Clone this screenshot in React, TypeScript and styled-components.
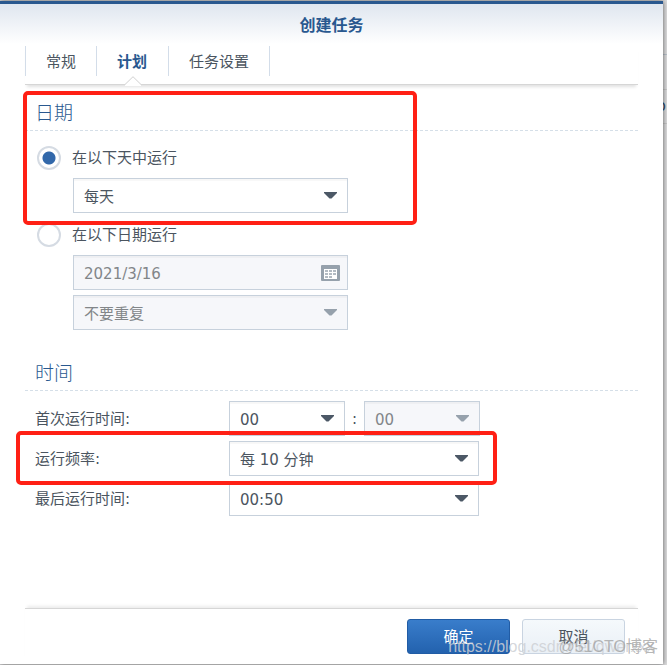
import React from 'react';
import styled, { createGlobalStyle, css } from 'styled-components';

const GlobalStyle = createGlobalStyle`
  *, *::before, *::after { box-sizing: border-box; }
  body {
    margin: 0;
    background: #dcdcdd;
    color: #4b5560;
    font-family: "DejaVu Sans", "Noto Sans CJK SC", sans-serif;
    font-size: 15px;
    font-weight: 400;
    line-height: 20px;
  }
  button, input, select { font: inherit; color: inherit; }
`;

const Screen = styled.div`
  position: relative;
  min-height: 100vh;
  display: flex;
  overflow: hidden;
  padding: 1px 4px 1px 0;
  background: #dcdcdd;
`;

const Backdrop = styled.div`
  position: absolute;
  top: 54px;
  right: 0;
  width: 4px;
  height: 70px;
  overflow: hidden;
  border-top: 1px solid #b9c2cb;
  border-bottom: 1px solid #c8c8c8;
`;

const BackdropRow = styled.div`
  height: 35px;
  border-bottom: 1px solid #c8c8c8;
`;

const BackdropText = styled.div`
  display: flex;
  justify-content: flex-end;
  padding: 6px 1px 0 0;
  color: #35506e;
`;

const Dialog = styled.main`
  position: relative;
  flex: 1;
  display: flex;
  flex-direction: column;
  border-top: 3px solid #29588f;
  background: linear-gradient(#dfe6ef, #ffffff 40px);
  box-shadow: 0 0 5px rgba(0, 0, 0, 0.6);
`;

const Title = styled.h1`
  margin: 0;
  padding: 10px 0 8px;
  color: #29588f;
  font-size: 16px;
  font-weight: 700;
  line-height: 24px;
  text-align: center;
`;

const TabBar = styled.div`
  display: flex;
  margin: 0 25px;
  padding-bottom: 8px;
  border-bottom: 1px solid #d6d6d6;
  box-shadow: 0 4px 3px -2px rgba(0, 0, 0, 0.12);
`;

const Tab = styled.button<{ $active?: boolean }>`
  position: relative;
  height: 30px;
  padding: 2px 20px 0;
  border: 0;
  border-right: 1px solid #d3dde9;
  background: none;
  &:first-child { border-left: 1px solid #d3dde9; }
  ${({ $active }) => $active && css`
    padding: 2px 21px 0 20px;
    color: #29588f;
    font-weight: 700;
  `}
`;

const Notch = styled.svg`
  position: absolute;
  left: calc(50% - 8px);
  top: 30px;
`;

const Body = styled.div`
  flex: 1;
  padding: 13px 25px 0;
`;

const Section = styled.section`
  position: relative;
  padding-bottom: 23px;
`;

const Heading = styled.h2`
  margin: 0 0 10px;
  padding: 3px 10px 4px;
  border-bottom: 1px dashed #d5dfe8;
  color: #29588f;
  font-size: 19px;
  font-weight: 300;
  line-height: 25px;
`;

const Option = styled.div`
  padding: 5px 0 5px 12px;
`;

const OptionLabel = styled.label`
  display: flex;
  align-items: center;
  gap: 11px;
  height: 23px;
  margin-bottom: 9px;
`;

const Radio = styled.input`
  appearance: none;
  width: 24px;
  height: 24px;
  margin: 0;
  border: 2px solid #d5dbe3;
  border-radius: 50%;
  background: #fff;
  &:checked {
    background: radial-gradient(circle, #3268aa 6px, #fff 7px);
  }
`;

const Fields = styled.div`
  display: flex;
  flex-direction: column;
  gap: 5px;
  width: 275px;
  margin-left: 36px;
`;

const FieldBox = styled.div<{ $width?: number }>`
  position: relative;
  width: ${({ $width }) => ($width ? `${$width}px` : '100%')};
  height: 35px;
`;

const control = css`
  appearance: none;
  display: block;
  width: 100%;
  height: 35px;
  padding: 2px 30px 0 10px;
  border: 1px solid #c7d1dc;
  border-radius: 0;
  background: #fff;
  box-shadow: inset 0 2px 1px rgba(0, 0, 0, 0.03);
  opacity: 1;
  &:disabled {
    background: #f6f7fa;
    color: #828689;
  }
`;

const SelectControl = styled.select`${control}`;
const InputControl = styled.input`${control}`;

const FieldIcon = styled.svg<{ $right: number }>`
  position: absolute;
  right: ${({ $right }) => $right}px;
  top: 0;
  bottom: 0;
  margin: auto 0;
  pointer-events: none;
`;

const Row = styled.div`
  position: relative;
  display: flex;
  align-items: center;
  height: 35px;
  margin-bottom: 5px;
  padding-left: 10px;
`;

const RowLabel = styled.label`
  width: 194px;
`;

const Colon = styled.span`
  width: 19px;
  text-align: center;
`;

const Highlight = styled.div`
  position: absolute;
  border: 4px solid #ff2015;
  border-radius: 5px;
  pointer-events: none;
  z-index: 1;
`;

const DateHighlight = styled(Highlight)`
  top: -7px;
  left: -2px;
  width: 394px;
  height: 134px;
`;

const RateHighlight = styled(Highlight)`
  top: -10px;
  left: -9px;
  width: 481px;
  height: 54px;
`;

const Footer = styled.footer`
  display: flex;
  justify-content: flex-end;
  gap: 12px;
  margin: 0 25px;
  padding: 10px 13px 10px 0;
  border-top: 1px solid #d6d6d6;
  box-shadow: 0 -4px 3px -2px rgba(0, 0, 0, 0.08);
`;

const Button = styled.button<{ $primary?: boolean }>`
  width: 103px;
  height: 35px;
  border: 1px solid ${({ $primary }) => ($primary ? '#215ca5' : '#c9d4e1')};
  border-radius: 3px;
  background: ${({ $primary }) =>
    $primary ? 'linear-gradient(#397dcb, #2362ae)' : 'linear-gradient(#f5f9fc, #eaf0f6)'};
  color: ${({ $primary }) => ($primary ? '#fff' : '#4b5560')};
`;

const Watermark = styled.div`
  position: absolute;
  right: 9px;
  bottom: 8px;
  display: flex;
  font-family: "Liberation Sans", "Noto Sans CJK SC", sans-serif;
  font-size: 16px;
  line-height: 20px;
  white-space: nowrap;
  pointer-events: none;
`;

const BlogUrl = styled.span`
  margin-right: -96px;
  color: rgba(205, 208, 213, 0.85);
`;

const SiteMark = styled.span`
  color: rgba(160, 160, 160, 0.75);
`;

type SelectProps = { id?: string; label?: string; value: string; disabled?: boolean; width?: number };

function Select({ id, label, value, disabled, width }: SelectProps) {
  return (
    <FieldBox $width={width}>
      <SelectControl id={id} aria-label={label} disabled={disabled} defaultValue={value}>
        <option>{value}</option>
      </SelectControl>
      <FieldIcon $right={11} width="13" height="7" viewBox="0 0 13 7" aria-hidden="true">
        <path d="M0 0h13v1L7.5 6.5h-2L0 1z" fill={disabled ? '#96a1ac' : '#4c5866'} />
      </FieldIcon>
    </FieldBox>
  );
}

function CalendarIcon() {
  return (
    <FieldIcon $right={8} width="19" height="16" viewBox="0 0 19 16" aria-hidden="true">
      <rect width="19" height="16" rx="1" fill="#96a1ac" />
      <rect x="3" y="4" width="13" height="10" fill="#fff" />
      <path
        d="M4 5h3v2H4zM8 5h3v2H8zM12 5h3v2h-3zM4 8h3v2H4zM8 8h3v2H8zM12 8h3v2h-3zM4 11h3v2H4zM8 11h3v2H8z"
        fill="#b3bbc3"
      />
    </FieldIcon>
  );
}

export default function App() {
  return (
    <>
      <GlobalStyle />
      <Screen>
        <Backdrop aria-hidden="true">
          <BackdropRow />
          <BackdropText>o</BackdropText>
        </Backdrop>
        <Dialog role="dialog" aria-labelledby="title">
          <Title id="title">创建任务</Title>
          <TabBar role="tablist">
            <Tab role="tab">常规</Tab>
            <Tab role="tab" aria-selected="true" $active>
              计划
              <Notch width="16" height="10" viewBox="0 0 16 10" aria-hidden="true">
                <path d="M0 10V8.5L8 .7l8 7.8V10z" fill="#fff" />
                <path d="M0 8.5L8 .7l8 7.8" fill="none" stroke="#d0d0d0" />
              </Notch>
            </Tab>
            <Tab role="tab">任务设置</Tab>
          </TabBar>
          <Body>
            <Section>
              <Heading>日期</Heading>
              <Option>
                <OptionLabel>
                  <Radio type="radio" name="when" defaultChecked />
                  在以下天中运行
                </OptionLabel>
                <Fields>
                  <Select label="在以下天中运行" value="每天" />
                </Fields>
              </Option>
              <Option>
                <OptionLabel>
                  <Radio type="radio" name="when" />
                  在以下日期运行
                </OptionLabel>
                <Fields>
                  <FieldBox>
                    <InputControl aria-label="日期" defaultValue="2021/3/16" disabled />
                    <CalendarIcon />
                  </FieldBox>
                  <Select label="重复" value="不要重复" disabled />
                </Fields>
              </Option>
              <DateHighlight />
            </Section>
            <Section>
              <Heading>时间</Heading>
              <Row>
                <RowLabel htmlFor="first-hour">首次运行时间:</RowLabel>
                <Select id="first-hour" value="00" width={116} />
                <Colon>:</Colon>
                <Select label="分钟" value="00" width={116} disabled />
              </Row>
              <Row>
                <RowLabel htmlFor="rate">运行频率:</RowLabel>
                <Select id="rate" value="每 10 分钟" width={250} />
                <RateHighlight />
              </Row>
              <Row>
                <RowLabel htmlFor="last">最后运行时间:</RowLabel>
                <Select id="last" value="00:50" width={250} />
              </Row>
            </Section>
          </Body>
          <Footer>
            <Button $primary>确定</Button>
            <Button>取消</Button>
          </Footer>
        </Dialog>
        <Watermark>
          <BlogUrl>https://blog.csdn.net/qwerxxx</BlogUrl>
          <SiteMark>@51CTO博客</SiteMark>
        </Watermark>
      </Screen>
    </>
  );
}
